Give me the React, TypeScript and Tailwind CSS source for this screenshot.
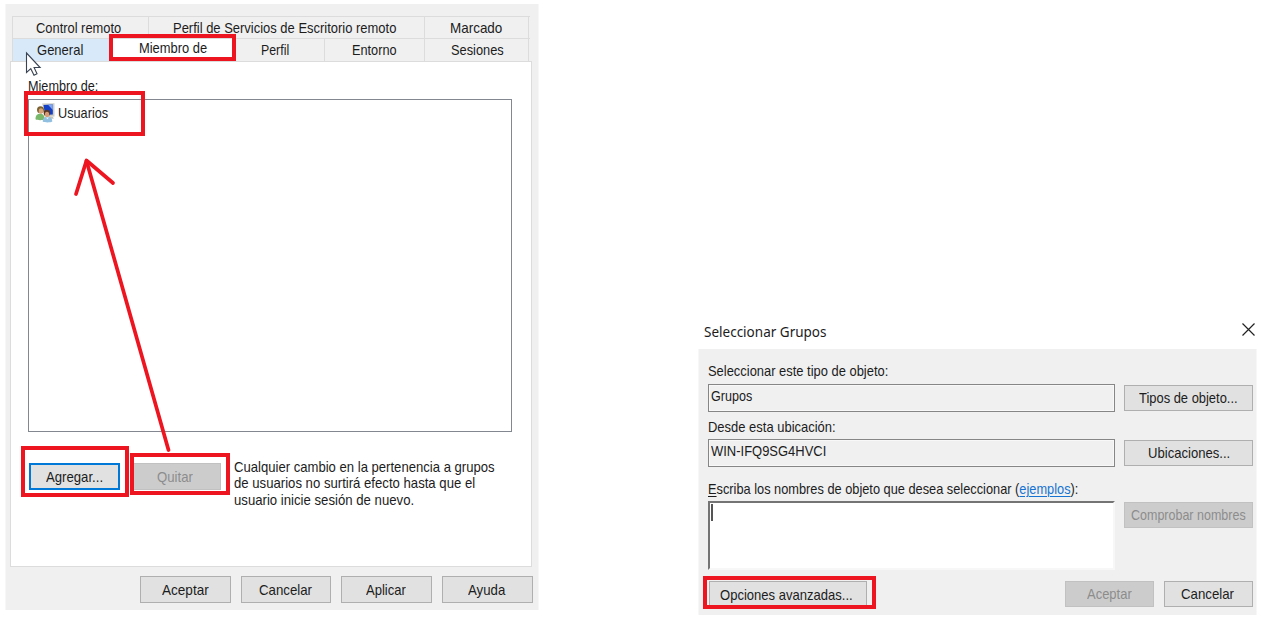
import { useLayoutEffect, useRef, useState, type ReactNode } from "react";

/** Text condensed horizontally so that it fills exactly `w` pixels. */
function Fit({ w, children, className = "" }: { w: number; children: ReactNode; className?: string }) {
  const ref = useRef<HTMLSpanElement>(null);
  const [scale, setScale] = useState(1);
  useLayoutEffect(() => {
    if (ref.current) setScale(w / ref.current.offsetWidth);
  }, [w]);
  return (
    <span className={`block shrink-0 ${className}`} style={{ width: w }}>
      <span ref={ref} className="inline-block origin-left whitespace-nowrap" style={{ transform: `scaleX(${scale})` }}>
        {children}
      </span>
    </span>
  );
}

function Button({ w, label, className = "", disabled = false }: { w: number; label: string; className?: string; disabled?: boolean }) {
  return (
    <button
      type="button"
      disabled={disabled}
      className={`flex shrink-0 items-center justify-center border ${
        disabled ? "border-[#c1c1c1] bg-[#cccccc] text-[#8c8c8c]" : "border-[#afafaf] bg-[#e1e1e1]"
      } ${className}`}
    >
      <Fit w={w}>{label}</Fit>
    </button>
  );
}

function Tab({ w, label, className = "" }: { w: number; label: string; className?: string }) {
  return (
    <div className={`flex h-full shrink-0 items-center border-r border-[#dcdcdc] ${className}`}>
      <Fit w={w}>{label}</Fit>
    </div>
  );
}

function Highlight({ className }: { className: string }) {
  return <div className={`pointer-events-none absolute border-4 border-[#ed1520] ${className}`} />;
}

function UsersIcon() {
  return (
    <svg width="20" height="20" viewBox="0 0 20 20" className="shrink-0">
      <path d="M7 .6 19.500.2v13.300l-8 .8z" fill="#cfcdc4" />
      <path d="M8.500 1.900 17.800 1.500v10L10 12z" fill="#1641c5" />
      <path d="m13 1.700 4.800-.2v5.500z" fill="#7fa6f2" />
      <path d="M14 14h4l.8 1.800h-5z" fill="#c5c3ba" />
      <path d="M.5 16.300c0-4 1.700-5.500 4.700-5.500s4.600 2 4.600 5.500c-2.200 1.200-7 1.200-9.300 0z" fill="#79b76b" />
      <circle cx="5.500" cy="6.700" r="3.500" fill="#7a6132" />
      <ellipse cx="6" cy="8" rx="2.300" ry="2.800" fill="#d8a576" />
      <path d="M7.700 18.500c0-3.200 1.800-4.700 4.800-4.700s4.800 1.500 4.800 4.700c-2.300 1.200-7.300 1.200-9.600 0z" fill="#90bfe0" />
      <circle cx="11.900" cy="9.900" r="3.200" fill="#573723" />
      <ellipse cx="12" cy="11.400" rx="2.200" ry="2.700" fill="#d79b75" />
      <path d="m11 14.500 1.300 1.800 1.700-1.800" fill="#edf5fa" />
    </svg>
  );
}

function PropertiesDialog() {
  return (
    <section className="relative ml-[5px] mt-[4px] flex h-[606px] w-[534px] shrink-0 flex-col border-x border-[#f7f7f7] bg-[#f0f0f0]">
      <div className="ml-[6px] mt-[12px] flex h-[22px] w-[518px] border-l border-t border-[#dcdcdc]">
        <Tab w={85} label="Control remoto" className="w-[136px] pl-[23px]" />
        <Tab w={223} label="Perfil de Servicios de Escritorio remoto" className="w-[276px] pl-[24px]" />
        <Tab w={52} label="Marcado" className="w-[104px] pl-[25px]" />
      </div>
      <div className="ml-[6px] flex h-[23px] w-[518px] border-l border-t border-[#dcdcdc]">
        <Tab w={46} label="General" className="w-[97px] bg-[#d8eaf9] pl-[24px]" />
        <Tab w={68} label="Miembro de" className="w-[126px] bg-white pb-[4px] pl-[29px]" />
        <Tab w={28} label="Perfil" className="w-[89px] pl-[25px]" />
        <Tab w={45} label="Entorno" className="w-[100px] pl-[27px]" />
        <Tab w={53} label="Sesiones" className="w-[104px] pl-[26px]" />
      </div>
      <div className="ml-[4px] flex h-[506px] w-[522px] flex-col border border-[#dcdcdc] bg-white pl-[17px]">
        <Fit w={70} className="mt-[15px] h-[22px]">Miembro de:</Fit>
        <div className="h-[333px] w-[484px] border border-[#828790] pl-[6px] pt-[3px]">
          <div className="flex items-center gap-[3px]">
            <UsersIcon />
            <Fit w={50}>Usuarios</Fit>
          </div>
        </div>
        <div className="mt-[31px] flex">
          <Button w={57} label="Agregar..." className="ml-px h-[27px] w-[91px] border-2 !border-[#0078d7]" />
          <Button w={36} label="Quitar" disabled className="ml-[12px] h-[27px] w-[89px] pr-[4px]" />
          <div className="-mt-[4px] ml-[13px] leading-[16.3px]">
            <Fit w={261}>Cualquier cambio en la pertenencia a grupos</Fit>
            <Fit w={241}>de usuarios no surtirá efecto hasta que el</Fit>
            <Fit w={180}>usuario inicie sesión de nuevo.</Fit>
          </div>
        </div>
      </div>
      <div className="mt-[9px] flex justify-end gap-[10px] pr-[5px]">
        <Button w={47} label="Aceptar" className="h-[27px] w-[91px]" />
        <Button w={53} label="Cancelar" className="h-[27px] w-[90px] pr-[2px]" />
        <Button w={40} label="Aplicar" className="h-[27px] w-[91px] pr-[2px]" />
        <Button w={37} label="Ayuda" className="h-[27px] w-[91px] pr-[2px]" />
      </div>
    </section>
  );
}

function Field({ w, text }: { w: number; text: string }) {
  return (
    <div className="h-[28px] w-[407px] border border-[#868686] pl-[2px] pt-[2px] shadow-[inset_0_0_0_1px_#f8f8f8]">
      <Fit w={w}>{text}</Fit>
    </div>
  );
}

function SelectGroupsDialog() {
  return (
    <section className="ml-[159px] mt-[310px] flex w-[559px] shrink-0 flex-col">
      <header className="flex h-[39px] items-center justify-between pl-[6px] pr-[2px]">
        <Fit w={123} className="mt-[2px] font-['Noto_Sans',sans-serif] text-[14.5px]">Seleccionar Grupos</Fit>
        <svg width="13" height="13" viewBox="0 0 13 13" fill="none" stroke="#222" strokeWidth="1.2">
          <path d="m.5.5 12 12M12.5.5l-12 12" />
        </svg>
      </header>
      <div className="flex h-[266px] flex-col border-x border-[#f7f7f7] bg-[#f0f0f0] pl-[9px] pr-[3px]">
        <Fit w={180} className="mt-[13px] h-[22px]">Seleccionar este tipo de objeto:</Fit>
        <div className="flex items-center justify-between">
          <Field w={41} text="Grupos" />
          <Button w={99} label="Tipos de objeto..." className="h-[26px] w-[129px]" />
        </div>
        <Fit w={128} className="mt-[6px] h-[21px]">Desde esta ubicación:</Fit>
        <div className="flex items-center justify-between">
          <Field w={115} text="WIN-IFQ9SG4HVCI" />
          <Button w={82} label="Ubicaciones..." className="h-[26px] w-[129px]" />
        </div>
        <Fit w={370} className="mt-[13px] h-[21px]">
          <span className="underline underline-offset-2">E</span>scriba los nombres de objeto que desea seleccionar (
          <a className="text-[#1673d2] underline underline-offset-2">ejemplos</a>):
        </Fit>
        <div className="flex items-start justify-between">
          <div className="h-[69px] w-[407px] border-2 border-b-[#f7f7f7] border-l-[#747474] border-r-[#f7f7f7] border-t-[#747474] bg-white pl-px pt-px">
            <div className="h-[17px] w-[2px] bg-[#555]" />
          </div>
          <Button w={115} label="Comprobar nombres" disabled className="mt-[1px] h-[26px] w-[129px]" />
        </div>
        <div className="mt-[11px] flex">
          <Button w={133} label="Opciones avanzadas..." className="ml-[1px] h-[27px] w-[158px] pr-[3px]" />
          <Button w={45} label="Aceptar" disabled className="ml-auto h-[26px] w-[89px]" />
          <Button w={53} label="Cancelar" className="ml-[10px] h-[26px] w-[89px] pr-[2px]" />
        </div>
      </div>
    </section>
  );
}

export default function App() {
  return (
    <main className="relative flex h-[630px] w-[1282px] items-start overflow-hidden bg-white font-['Liberation_Sans',Arial,sans-serif] text-[15px] leading-[18px] text-[#1c1c1c]">
      <PropertiesDialog />
      <SelectGroupsDialog />
      <Highlight className="left-[109px] top-[34px] h-[27px] w-[127px]" />
      <Highlight className="left-[24px] top-[91px] h-[45px] w-[121px]" />
      <Highlight className="left-[21px] top-[446px] h-[51px] w-[108px]" />
      <Highlight className="left-[130px] top-[453px] h-[42px] w-[100px]" />
      <Highlight className="left-[703px] top-[576px] h-[33px] w-[173px]" />
      <svg className="pointer-events-none absolute left-0 top-0" width="240" height="460" fill="none">
        <g stroke="#ed1520" strokeWidth="3.7" strokeLinecap="round" strokeLinejoin="round">
          <path d="M168.5 450 86.5 161" />
          <path d="M76 194 86.5 160.5 113 183" />
        </g>
        <path d="M26.5 53v19.500l4.300-3.800 3.200 6.500 3-1.400-2.900-6.300h6z" fill="#fff" stroke="#3a4352" strokeWidth="1.1" />
      </svg>
    </main>
  );
}
